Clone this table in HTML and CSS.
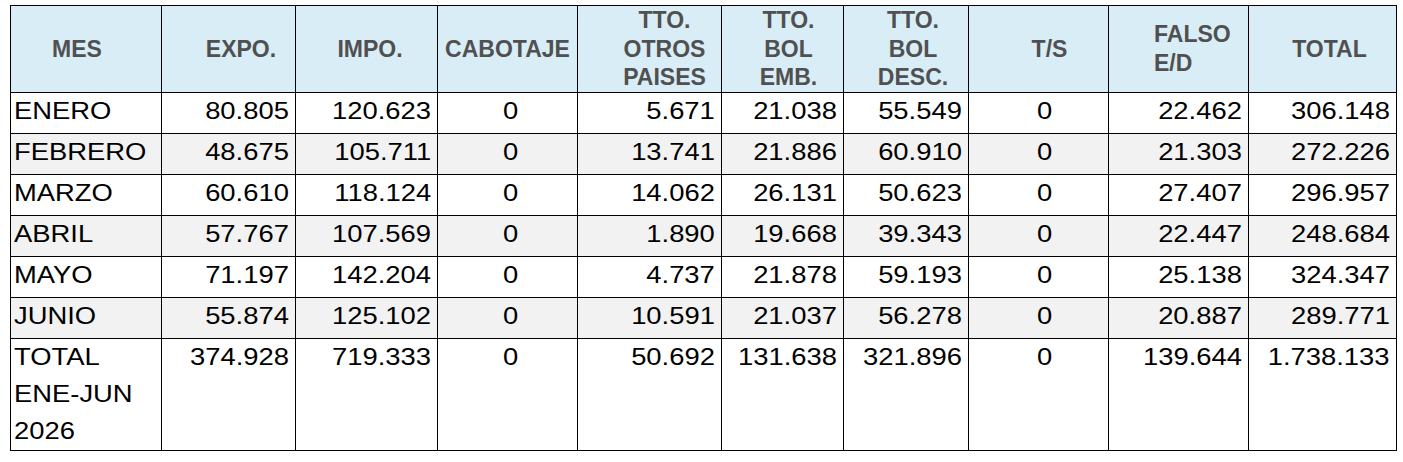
FILE: index.html
```html
<!DOCTYPE html>
<html lang="es">
<head>
<meta charset="utf-8">
<title>Movimiento ENE-JUN 2026</title>
<link rel="stylesheet" href="styles.css">
</head>
<body>
<table class="report">
  <colgroup>
    <col class="w-mes"><col class="w-expo"><col class="w-impo"><col class="w-cab"><col class="w-otros">
    <col class="w-emb"><col class="w-desc"><col class="w-ts"><col class="w-falso"><col class="w-total">
  </colgroup>
  <thead>
    <tr>
      <th class="h-mes">MES</th>
      <th class="h-expo">EXPO.</th>
      <th class="h-impo">IMPO.</th>
      <th class="h-cab">CABOTAJE</th>
      <th class="h-otros">TTO.<br>OTROS<br>PAISES</th>
      <th class="h-emb">TTO.<br>BOL<br>EMB.</th>
      <th class="h-desc">TTO.<br>BOL<br>DESC.</th>
      <th class="h-ts">T/S</th>
      <th class="h-falso">FALSO<br>E/D</th>
      <th class="h-total">TOTAL</th>
    </tr>
  </thead>
  <tbody>
    <tr>
      <td class="mes"><span class="v">ENERO</span></td>
      <td class="num"><span class="v">80.805</span></td>
      <td class="num"><span class="v">120.623</span></td>
      <td class="cab"><span class="v">0</span></td>
      <td class="num"><span class="v">5.671</span></td>
      <td class="num"><span class="v">21.038</span></td>
      <td class="num"><span class="v">55.549</span></td>
      <td class="ts"><span class="v">0</span></td>
      <td class="num"><span class="v">22.462</span></td>
      <td class="num"><span class="v">306.148</span></td>
    </tr>
    <tr class="alt">
      <td class="mes"><span class="v">FEBRERO</span></td>
      <td class="num"><span class="v">48.675</span></td>
      <td class="num"><span class="v">105.711</span></td>
      <td class="cab"><span class="v">0</span></td>
      <td class="num"><span class="v">13.741</span></td>
      <td class="num"><span class="v">21.886</span></td>
      <td class="num"><span class="v">60.910</span></td>
      <td class="ts"><span class="v">0</span></td>
      <td class="num"><span class="v">21.303</span></td>
      <td class="num"><span class="v">272.226</span></td>
    </tr>
    <tr>
      <td class="mes"><span class="v">MARZO</span></td>
      <td class="num"><span class="v">60.610</span></td>
      <td class="num"><span class="v">118.124</span></td>
      <td class="cab"><span class="v">0</span></td>
      <td class="num"><span class="v">14.062</span></td>
      <td class="num"><span class="v">26.131</span></td>
      <td class="num"><span class="v">50.623</span></td>
      <td class="ts"><span class="v">0</span></td>
      <td class="num"><span class="v">27.407</span></td>
      <td class="num"><span class="v">296.957</span></td>
    </tr>
    <tr class="alt">
      <td class="mes"><span class="v">ABRIL</span></td>
      <td class="num"><span class="v">57.767</span></td>
      <td class="num"><span class="v">107.569</span></td>
      <td class="cab"><span class="v">0</span></td>
      <td class="num"><span class="v">1.890</span></td>
      <td class="num"><span class="v">19.668</span></td>
      <td class="num"><span class="v">39.343</span></td>
      <td class="ts"><span class="v">0</span></td>
      <td class="num"><span class="v">22.447</span></td>
      <td class="num"><span class="v">248.684</span></td>
    </tr>
    <tr>
      <td class="mes"><span class="v">MAYO</span></td>
      <td class="num"><span class="v">71.197</span></td>
      <td class="num"><span class="v">142.204</span></td>
      <td class="cab"><span class="v">0</span></td>
      <td class="num"><span class="v">4.737</span></td>
      <td class="num"><span class="v">21.878</span></td>
      <td class="num"><span class="v">59.193</span></td>
      <td class="ts"><span class="v">0</span></td>
      <td class="num"><span class="v">25.138</span></td>
      <td class="num"><span class="v">324.347</span></td>
    </tr>
    <tr class="alt">
      <td class="mes"><span class="v">JUNIO</span></td>
      <td class="num"><span class="v">55.874</span></td>
      <td class="num"><span class="v">125.102</span></td>
      <td class="cab"><span class="v">0</span></td>
      <td class="num"><span class="v">10.591</span></td>
      <td class="num"><span class="v">21.037</span></td>
      <td class="num"><span class="v">56.278</span></td>
      <td class="ts"><span class="v">0</span></td>
      <td class="num"><span class="v">20.887</span></td>
      <td class="num"><span class="v">289.771</span></td>
    </tr>
    <tr class="total">
      <td class="mes"><span class="v">TOTAL<br>ENE-JUN<br>2026</span></td>
      <td class="num"><span class="v">374.928</span></td>
      <td class="num"><span class="v">719.333</span></td>
      <td class="cab"><span class="v">0</span></td>
      <td class="num"><span class="v">50.692</span></td>
      <td class="num"><span class="v">131.638</span></td>
      <td class="num"><span class="v">321.896</span></td>
      <td class="ts"><span class="v">0</span></td>
      <td class="num"><span class="v">139.644</span></td>
      <td class="num"><span class="v">1.738.133</span></td>
    </tr>
  </tbody>
</table>
</body>
</html>
```

FILE: styles.css
```css
html, body {
  background: #ffffff;
}

body {
  margin: 5px 0 0 10px;
  font-family: "Liberation Sans", Arial, sans-serif;
}

.report {
  border-collapse: collapse;
  table-layout: fixed;
  width: 1387px;
}

.w-mes { width: 151px; }
.w-expo { width: 134px; }
.w-impo { width: 142px; }
.w-cab { width: 140px; }
.w-otros { width: 144px; }
.w-emb { width: 122px; }
.w-desc { width: 125px; }
.w-ts { width: 140px; }
.w-falso { width: 140px; }
.w-total { width: 148px; }

.report th,
.report td {
  border: 1px solid #000000;
  padding: 0;
}

.report th {
  height: 86px;
  background: #d9edf7;
  color: #505050;
  font-size: 23px;
  font-weight: bold;
  line-height: 28.7px;
  text-align: center;
  vertical-align: middle;
}

.report .h-mes { padding-right: 18px; }
.report .h-expo { padding-left: 25px; }
.report .h-impo { padding-left: 7px; }
.report .h-otros { padding-left: 30px; }
.report .h-emb { padding-left: 12px; }
.report .h-desc { padding-left: 14px; }
.report .h-ts { padding-left: 22px; }
.report .h-falso { padding-left: 45px; text-align: left; }
.report .h-total { padding-left: 14px; }

.report td {
  height: 40px;
  color: #000000;
  font-size: 23.5px;
  line-height: 37px;
  vertical-align: top;
  white-space: nowrap;
}

.report tr.alt td {
  background: #f2f2f2;
}

.v {
  display: inline-block;
  transform: scaleX(1.165);
}

.report .mes {
  text-align: left;
  padding-left: 3px;
}
.mes .v { transform-origin: left center; }

.report .num {
  text-align: right;
  padding-right: 6px;
}
.num .v { transform-origin: right center; }

.report .cab {
  text-align: center;
  padding-left: 6px;
}
.report .ts {
  text-align: center;
  padding-left: 13px;
}
.cab .v,
.ts .v { transform-origin: center center; }
```
